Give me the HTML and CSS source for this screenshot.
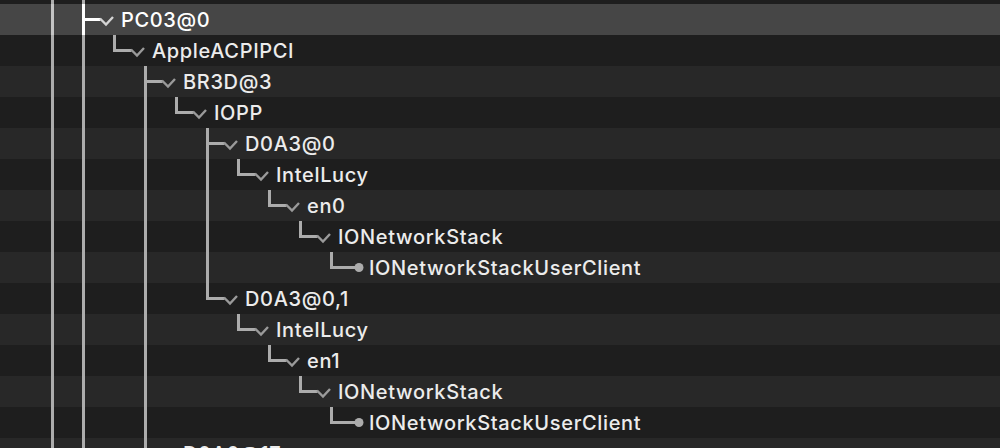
FILE: index.html
```html
<!DOCTYPE html>
<html lang="en">
<head>
<meta charset="utf-8">
<title>IORegistry tree</title>
<link rel="stylesheet" href="styles.css">
</head>
<body>
<div class="tree">
  <div class="row dark">
    <span class="g"></span><span class="g"></span>
  </div>

  <div class="row selected">
    <span class="g"></span>
    <svg class="conn" viewBox="0 0 38 31"><path class="ln" d="M1.5 0V31M1.5 15.5H18.5"/><path class="chev" d="M18 14.5L24 20.5L31 13"/></svg>
    <span class="label">PC03@0</span>
  </div>

  <div class="row dark">
    <span class="g"></span><span class="g"></span>
    <svg class="conn" viewBox="0 0 38 31"><path class="ln" d="M1.5 0V15.5H18.5"/><path class="chev" d="M18 14.5L24 20.5L31 13"/></svg>
    <span class="label">AppleACPIPCI</span>
  </div>

  <div class="row light">
    <span class="g"></span><span class="g"></span><span class="g none"></span>
    <svg class="conn" viewBox="0 0 38 31"><path class="ln" d="M1.5 0V31M1.5 15.5H18.5"/><path class="chev" d="M18 14.5L24 20.5L31 13"/></svg>
    <span class="label">BR3D@3</span>
  </div>

  <div class="row dark">
    <span class="g"></span><span class="g"></span><span class="g none"></span><span class="g"></span>
    <svg class="conn" viewBox="0 0 38 31"><path class="ln" d="M1.5 0V15.5H18.5"/><path class="chev" d="M18 14.5L24 20.5L31 13"/></svg>
    <span class="label">IOPP</span>
  </div>

  <div class="row light">
    <span class="g"></span><span class="g"></span><span class="g none"></span><span class="g"></span><span class="g none"></span>
    <svg class="conn" viewBox="0 0 38 31"><path class="ln" d="M1.5 0V31M1.5 15.5H18.5"/><path class="chev" d="M18 14.5L24 20.5L31 13"/></svg>
    <span class="label">D0A3@0</span>
  </div>

  <div class="row dark">
    <span class="g"></span><span class="g"></span><span class="g none"></span><span class="g"></span><span class="g none"></span><span class="g"></span>
    <svg class="conn" viewBox="0 0 38 31"><path class="ln" d="M1.5 0V15.5H18.5"/><path class="chev" d="M18 14.5L24 20.5L31 13"/></svg>
    <span class="label">IntelLucy</span>
  </div>

  <div class="row light">
    <span class="g"></span><span class="g"></span><span class="g none"></span><span class="g"></span><span class="g none"></span><span class="g"></span><span class="g none"></span>
    <svg class="conn" viewBox="0 0 38 31"><path class="ln" d="M1.5 0V15.5H18.5"/><path class="chev" d="M18 14.5L24 20.5L31 13"/></svg>
    <span class="label">en0</span>
  </div>

  <div class="row dark">
    <span class="g"></span><span class="g"></span><span class="g none"></span><span class="g"></span><span class="g none"></span><span class="g"></span><span class="g none"></span><span class="g none"></span>
    <svg class="conn" viewBox="0 0 38 31"><path class="ln" d="M1.5 0V15.5H18.5"/><path class="chev" d="M18 14.5L24 20.5L31 13"/></svg>
    <span class="label">IONetworkStack</span>
  </div>

  <div class="row light">
    <span class="g"></span><span class="g"></span><span class="g none"></span><span class="g"></span><span class="g none"></span><span class="g"></span><span class="g none"></span><span class="g none"></span><span class="g none"></span>
    <svg class="conn" viewBox="0 0 38 31"><path class="ln" d="M1.5 0V15.5H28"/><circle class="dot" cx="29" cy="15.5" r="4.5"/></svg>
    <span class="label">IONetworkStackUserClient</span>
  </div>

  <div class="row dark">
    <span class="g"></span><span class="g"></span><span class="g none"></span><span class="g"></span><span class="g none"></span>
    <svg class="conn" viewBox="0 0 38 31"><path class="ln" d="M1.5 0V15.5H18.5"/><path class="chev" d="M18 14.5L24 20.5L31 13"/></svg>
    <span class="label">D0A3@0,1</span>
  </div>

  <div class="row light">
    <span class="g"></span><span class="g"></span><span class="g none"></span><span class="g"></span><span class="g none"></span><span class="g none"></span>
    <svg class="conn" viewBox="0 0 38 31"><path class="ln" d="M1.5 0V15.5H18.5"/><path class="chev" d="M18 14.5L24 20.5L31 13"/></svg>
    <span class="label">IntelLucy</span>
  </div>

  <div class="row dark">
    <span class="g"></span><span class="g"></span><span class="g none"></span><span class="g"></span><span class="g none"></span><span class="g none"></span><span class="g none"></span>
    <svg class="conn" viewBox="0 0 38 31"><path class="ln" d="M1.5 0V15.5H18.5"/><path class="chev" d="M18 14.5L24 20.5L31 13"/></svg>
    <span class="label">en1</span>
  </div>

  <div class="row light">
    <span class="g"></span><span class="g"></span><span class="g none"></span><span class="g"></span><span class="g none"></span><span class="g none"></span><span class="g none"></span><span class="g none"></span>
    <svg class="conn" viewBox="0 0 38 31"><path class="ln" d="M1.5 0V15.5H18.5"/><path class="chev" d="M18 14.5L24 20.5L31 13"/></svg>
    <span class="label">IONetworkStack</span>
  </div>

  <div class="row dark">
    <span class="g"></span><span class="g"></span><span class="g none"></span><span class="g"></span><span class="g none"></span><span class="g none"></span><span class="g none"></span><span class="g none"></span><span class="g none"></span>
    <svg class="conn" viewBox="0 0 38 31"><path class="ln" d="M1.5 0V15.5H28"/><circle class="dot" cx="29" cy="15.5" r="4.5"/></svg>
    <span class="label">IONetworkStackUserClient</span>
  </div>

  <div class="row light">
    <span class="g"></span><span class="g"></span><span class="g none"></span>
    <svg class="conn" viewBox="0 0 38 31"><path class="ln" d="M1.5 0V15.5H18.5"/><path class="chev" d="M18 14.5L24 20.5L31 13"/></svg>
    <span class="label">D0A0@17</span>
  </div>
</div>
</body>
</html>
```

FILE: styles.css
```css
html, body {
  margin: 0;
  padding: 0;
  background: #1e1e1e;
  overflow: hidden;
}

.tree {
  display: flex;
  flex-direction: column;
  margin-top: -27px;
  font-family: "Inter", "Liberation Sans", sans-serif;
  font-size: 20px;
  font-weight: 500;
  letter-spacing: 0.65px;
  color: #ececec;
}

.row {
  display: flex;
  align-items: center;
  height: 31px;
  padding-left: 51px;
  flex: none;
}

.row.dark { background: #1e1e1e; }
.row.light { background: #282828; }
.row.selected { background: #464646; color: #ffffff; }

.g {
  flex: none;
  width: 31px;
  height: 31px;
  background: linear-gradient(#acacac, #acacac) no-repeat 0 0 / 3px 100%;
}

.g.none { background: none; }

.selected .g {
  background-image: linear-gradient(#c4c4c4, #c4c4c4);
}

.conn {
  flex: none;
  width: 38px;
  height: 31px;
  overflow: visible;
}

.conn .ln {
  fill: none;
  stroke: #acacac;
  stroke-width: 3;
}

.conn .chev {
  fill: none;
  stroke: #9a9a9a;
  stroke-width: 2.4;
  stroke-linejoin: miter;
}

.conn .dot { fill: #acacac; }

.selected .conn .ln { stroke: #ffffff; }
.selected .conn .chev { stroke: #d4d4d4; }

.label {
  white-space: nowrap;
  line-height: 31px;
  padding-left: 1px;
  padding-top: 2px;
}
```
